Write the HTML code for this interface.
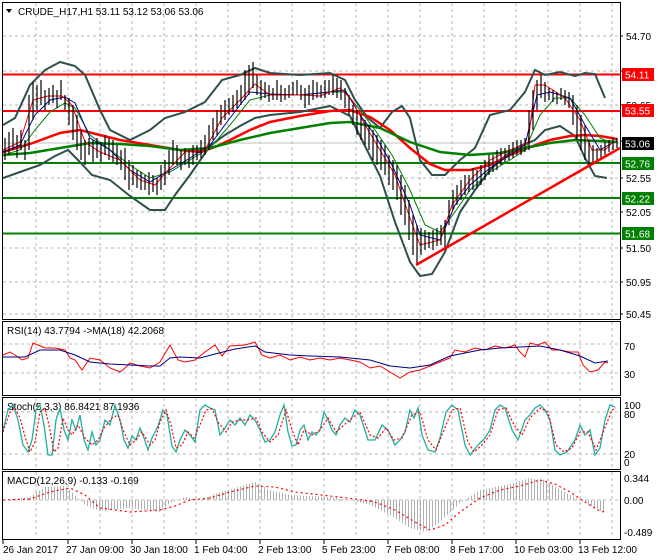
<!DOCTYPE html>
<html><head><meta charset="utf-8"><style>
html,body{margin:0;padding:0;background:#fff;}
svg{display:block;font-family:"Liberation Sans",sans-serif;font-size:10px;}
</style></head><body>
<svg width="660" height="560" viewBox="0 0 660 560" xmlns="http://www.w3.org/2000/svg">
<defs>
<pattern id="hist" width="3" height="10" patternUnits="userSpaceOnUse"><rect x="0" y="0" width="1" height="10" fill="#b0b0b0"/></pattern>
<clipPath id="cm"><rect x="3" y="3" width="617" height="315"/></clipPath>
</defs>
<rect width="660" height="560" fill="#fff"/>
<g stroke="#b8b8b8" stroke-dasharray="3,3" stroke-width="1">
<path d="M36 3V318M68 3V318M100 3V318M132 3V318M164 3V318M196 3V318M228 3V318M260 3V318M292 3V318M324 3V318M356 3V318M388 3V318M420 3V318M452 3V318M484 3V318M516 3V318M548 3V318M580 3V318M612 3V318"/>
<path d="M36 322V394M68 322V394M100 322V394M132 322V394M164 322V394M196 322V394M228 322V394M260 322V394M292 322V394M324 322V394M356 322V394M388 322V394M420 322V394M452 322V394M484 322V394M516 322V394M548 322V394M580 322V394M612 322V394"/>
<path d="M36 398V468M68 398V468M100 398V468M132 398V468M164 398V468M196 398V468M228 398V468M260 398V468M292 398V468M324 398V468M356 398V468M388 398V468M420 398V468M452 398V468M484 398V468M516 398V468M548 398V468M580 398V468M612 398V468"/>
<path d="M36 472V538M68 472V538M100 472V538M132 472V538M164 472V538M196 472V538M228 472V538M260 472V538M292 472V538M324 472V538M356 472V538M388 472V538M420 472V538M452 472V538M484 472V538M516 472V538M548 472V538M580 472V538M612 472V538"/>
<path d="M3 36H620M3 71H620M3 105H620M3 178H620M3 212H620M3 248H620M3 282H620M3 314H620"/>
<path d="M3 344H620M3 373H620M3 412H620M3 454H620M3 500H620"/>
</g>
<g clip-path="url(#cm)">
<path d="M3 143H620" stroke="#c0c0c0" stroke-width="1"/>
<path d="M3 74.5H620M3 111H620" stroke="#ff0000" stroke-width="2"/>
<path d="M3 163H620M3 198H620M3 233.5H620" stroke="#008000" stroke-width="2"/>
<g fill="none" stroke="#2f4f4f" stroke-width="2">
<polyline points="3,125 15,118 30,85 45,70 60,62 75,66 85,75 100,110 110,130 130,140 150,130 165,118 185,112 205,102 222,80 240,75 255,68 270,73 300,75 330,73 345,80 355,100 368,118 380,128 392,112 402,106 410,118 420,160 432,175 445,175 460,160 475,148 490,115 510,110 525,92 535,70 545,75 560,72 575,76 585,73 595,74 605,98"/>
<polyline points="3,178 20,172 40,165 55,156 68,150 78,160 92,175 110,180 130,196 150,210 165,210 175,195 190,175 210,146 225,135 240,126 255,118 270,115 300,112 330,106 350,116 365,146 380,176 395,222 410,262 420,276 432,274 445,252 460,212 475,190 490,170 505,156 520,146 535,140 545,130 560,126 575,136 585,158 595,176 607,178"/>
</g>
<polyline fill="none" stroke="#ff0000" stroke-width="2.5" points="3,152 30,144 60,133 80,130 100,135 120,140 150,145 180,150 200,152 215,147 230,140 250,130 270,122 300,116 330,111 350,110 370,117 390,130 410,148 430,164 445,170 470,170 490,165 510,155 530,147 550,140 570,136 585,135 600,136 617,139"/>
<polyline fill="none" stroke="#008000" stroke-width="2.5" points="3,155 30,153 60,148 90,143 120,144 150,146 180,150 210,148 240,140 270,133 300,128 330,123 350,122 380,128 410,142 440,152 470,155 500,153 525,148 550,143 575,140 600,141 617,142"/>
<polyline fill="none" stroke="#008000" stroke-width="1" points="3,155 20,150 35,130 50,112 65,103 75,108 90,135 110,150 130,165 150,178 170,172 190,160 210,148 230,125 250,100 270,95 300,95 330,92 345,92 360,110 375,130 392,155 410,190 425,225 440,232 455,212 470,190 490,172 510,160 525,150 540,115 555,98 570,98 585,115 600,138 612,143"/>
<polyline fill="none" stroke="#0000a0" stroke-width="1" points="3,152 20,145 35,115 50,100 65,97 75,103 90,138 110,150 130,170 150,182 170,170 190,158 210,145 230,118 250,92 270,94 300,95 330,92 345,90 360,115 375,135 392,165 410,205 420,235 440,240 455,205 470,185 490,168 510,155 525,145 537,95 550,92 570,98 585,125 600,150 612,143"/>
<polyline fill="none" stroke="#ff0000" stroke-width="1" points="3,150 20,142 33,100 48,96 62,96 72,105 85,142 100,152 120,160 140,180 155,185 170,168 185,152 205,150 222,118 240,100 255,84 270,95 300,95 320,96 340,88 352,100 365,125 380,150 395,175 410,218 420,245 440,240 452,205 470,180 490,160 510,150 528,143 535,85 545,85 565,98 580,120 592,150 605,150 612,143"/>
<g stroke="#000" stroke-width="1.2">
<path d="M5 138V160M9 132V155M13 128V150M17 135V158M21 130V150M25 140V160M29 95V150M33 82V120M37 85V110M41 80V105M45 90V110M49 88V105M53 85V103M57 90V108M61 80V100M65 95V110M69 98V125M73 105V140M77 115V150M81 130V160M85 140V165M89 138V155M93 140V162M97 138V158M101 142V162M105 135V155M109 138V160M113 140V162M117 145V165M121 150V170M125 148V180M129 160V190M133 165V185M137 170V188M141 172V190M145 175V190M149 172V195M153 175V192M157 178V195M161 165V190M165 160V185M169 150V175M173 140V165M177 145V165M181 150V170M185 148V165M189 150V168M193 145V165M197 145V160M201 140V158M205 135V155M209 125V150M213 118V140M217 110V135M221 105V125M225 100V120M229 98V115M233 95V112M237 90V108M241 85V105M245 70V100M249 65V95M253 62V88M257 75V95M261 80V100M265 82V98M269 85V102M273 88V100M277 80V100M281 85V102M285 88V100M289 85V98M293 82V95M297 80V95M301 85V100M305 88V108M309 85V105M313 80V100M317 82V98M321 85V98M325 80V98M329 80V95M333 75V95M337 78V98M341 80V100M345 88V108M349 95V115M353 105V125M357 110V135M361 115V140M365 120V145M369 125V150M373 130V160M377 135V165M381 140V170M385 145V175M389 155V185M393 160V190M397 165V200M401 175V215M405 185V225M409 200V240M413 215V255M417 225V265M421 228V255M425 230V250M429 232V248M433 230V250M437 228V246M441 225V245M445 220V250M449 200V225M453 190V210M457 185V205M461 180V200M465 175V195M469 175V192M473 168V190M477 170V188M481 165V185M485 160V180M489 155V175M493 155V172M497 150V170M501 148V165M505 148V162M509 145V160M513 142V158M517 140V155M521 140V155M525 138V152M529 110V150M533 90V130M537 80V110M541 75V98M545 82V102M549 88V100M553 90V102M557 92V104M561 88V100M565 90V105M569 92V108M573 95V125M577 105V140M581 115V150M585 125V160M589 140V165M593 145V165M597 148V160M601 145V158M605 142V155M609 140V152M613 138V150M617 138V148"/>
</g>
<path d="M416 265L620 148" stroke="#ff0000" stroke-width="2.5"/>
</g>
<g fill="none" stroke="#000" stroke-width="1">
<rect x="2.5" y="2.5" width="618" height="317"/>
<rect x="2.5" y="321.5" width="618" height="74"/>
<rect x="2.5" y="397.5" width="618" height="72"/>
<rect x="2.5" y="471.5" width="618" height="68"/>
</g>
<path d="M6 9L12 9L9 13Z" fill="#000"/>
<text x="18" y="15" fill="#000">CRUDE_H17,H1  53.11 53.12 53.06 53.06</text>
<g fill="#000">
<text x="626" y="40">54.70</text>
<text x="626" y="109">53.65</text>
<text x="626" y="182">52.55</text>
<text x="626" y="216">52.05</text>
<text x="626" y="252">51.50</text>
<text x="626" y="286">50.95</text>
<text x="626" y="318">50.45</text>
</g>
<g stroke="#000"><path d="M620 36h3M620 71h3M620 105h3M620 141h3M620 178h3M620 212h3M620 248h3M620 282h3M620 314h3"/></g>
<rect x="622" y="68" width="32" height="13" fill="#ff0000"/><text x="625" y="78.5" fill="#fff">54.11</text>
<rect x="622" y="104" width="32" height="13" fill="#ff0000"/><text x="625" y="114.5" fill="#fff">53.55</text>
<rect x="622" y="137" width="32" height="13" fill="#000"/><text x="625" y="147.5" fill="#fff">53.06</text>
<rect x="622" y="157" width="32" height="13" fill="#008000"/><text x="625" y="167.5" fill="#fff">52.76</text>
<rect x="622" y="192" width="32" height="13" fill="#008000"/><text x="625" y="202.5" fill="#fff">52.22</text>
<rect x="622" y="227" width="32" height="13" fill="#008000"/><text x="625" y="237.5" fill="#fff">51.68</text>
<text x="7" y="334" fill="#000">RSI(14) 43.7794  -&gt;MA(18) 42.2068</text>
<polyline fill="none" stroke="#ff0000" stroke-width="1" points="3,355 10,352 15,355 22,360 28,358 33,343 38,345 45,348 55,348 65,350 70,358 75,360 82,370 90,358 100,360 110,368 120,372 125,368 130,363 140,366 150,368 160,362 170,345 178,360 185,362 195,360 205,352 215,345 222,356 230,346 245,345 255,342 262,355 270,358 280,355 290,360 300,357 310,360 320,358 330,360 340,358 350,360 360,362 370,368 380,366 390,372 400,378 410,372 420,370 430,366 440,362 450,358 455,350 465,352 475,348 485,350 495,346 505,348 515,345 520,352 525,357 530,343 538,345 545,342 552,350 560,350 570,352 578,352 583,365 590,372 598,370 605,362 608,363"/>
<polyline fill="none" stroke="#000080" stroke-width="1" points="3,357 25,357 40,350 60,350 75,355 90,362 110,364 130,365 150,366 160,366 170,358 180,357 200,358 215,354 235,349 255,346 265,352 290,355 310,356 340,357 370,360 390,366 410,368 430,365 450,356 480,350 500,348 520,347 540,346 560,350 580,356 595,363 608,361"/>
<g fill="#000"><text x="624" y="350">70</text><text x="624" y="378">30</text></g>
<text x="7" y="410" fill="#000">Stoch(5,3,3) 86.8421 87.1936</text>
<polyline fill="none" stroke="#20b0a0" stroke-width="1.3" points="3,430 8,410 13,405 18,420 23,445 28,452 32,440 36,410 40,405 44,425 48,455 52,455 56,420 60,408 64,430 68,440 72,420 76,430 80,415 84,440 88,450 92,432 96,445 100,440 105,420 110,425 115,405 120,420 124,440 128,448 132,436 136,440 140,428 144,438 148,450 152,438 158,426 163,410 167,415 172,446 176,452 180,440 185,430 190,435 195,442 200,410 205,405 210,408 215,410 220,435 225,428 230,420 235,425 240,418 245,425 250,415 255,420 260,430 265,442 270,440 275,432 280,415 284,405 288,432 292,446 296,445 300,430 304,425 308,440 312,432 316,435 320,430 324,412 328,420 332,430 336,435 340,425 345,418 350,422 355,410 360,415 368,440 375,440 382,425 388,430 395,445 400,440 405,432 410,410 414,418 418,408 422,435 428,450 435,452 440,438 446,412 452,405 458,410 465,445 470,455 478,445 485,438 490,430 495,410 500,405 505,408 512,430 518,440 525,420 530,415 535,408 540,405 545,410 550,420 555,450 560,455 567,452 575,440 580,425 585,435 590,430 595,455 600,448 605,420 610,405 615,407"/>
<polyline fill="none" stroke="#ff0000" stroke-width="1.2" stroke-dasharray="2,2" points="3,432 10,412 15,408 20,418 26,440 30,452 35,442 40,412 45,408 50,430 54,452 58,448 63,418 68,430 72,435 78,425 85,438 92,445 98,440 104,428 112,418 118,415 124,432 130,445 136,440 142,432 150,445 155,440 160,422 166,410 171,425 176,448 182,445 188,432 194,438 200,425 206,410 212,409 218,422 226,432 232,422 240,420 248,420 256,418 262,432 270,442 278,435 286,410 292,430 298,445 304,430 312,435 320,430 328,418 336,432 344,425 352,418 360,412 370,435 378,438 386,428 394,440 402,438 412,415 420,412 428,440 436,450 444,430 452,410 460,408 468,442 474,452 482,445 490,435 498,410 506,408 514,425 522,435 530,418 540,408 548,412 556,445 564,452 572,448 580,432 588,432 596,450 604,430 612,410 616,408"/>
<g fill="#000"><text x="624" y="409">100</text><text x="624" y="418">80</text><text x="624" y="458">20</text><text x="624" y="466">0</text></g>
<polygon fill="url(#hist)" points="3,500 3,500 30,497 45,487 65,486 75,495 85,505 100,511 130,508 160,512 170,503 185,497 200,500 215,494 235,488 255,482 270,490 290,495 330,497 350,500 370,505 390,515 410,528 425,532 440,522 460,503 480,490 510,484 530,478 545,480 560,490 580,500 595,508 605,513 605,500"/>
<text x="7" y="484" fill="#000">MACD(12,26,9) -0.133 -0.169</text>
<polyline fill="none" stroke="#ff0000" stroke-width="1.2" stroke-dasharray="2,3" points="3,500 30,499 50,492 70,488 85,495 100,508 130,512 160,510 175,506 190,500 210,498 230,492 255,486 275,487 295,492 330,496 355,499 375,502 395,510 415,522 430,530 445,525 460,512 480,498 500,490 520,486 540,480 555,484 570,492 585,502 598,510 607,513"/>
<g fill="#000"><text x="624" y="482">0.344</text><text x="624" y="504">0.00</text><text x="624" y="536">-0.489</text></g>
<g stroke="#000"><path d="M3 540v4M68 540v4M132 540v4M196 540v4M260 540v4M324 540v4M388 540v4M452 540v4M516 540v4M580 540v4"/></g>
<g fill="#000">
<text x="3" y="553">26 Jan 2017</text>
<text x="66" y="553">27 Jan 09:00</text>
<text x="130" y="553">30 Jan 18:00</text>
<text x="194" y="553">1 Feb 04:00</text>
<text x="258" y="553">2 Feb 13:00</text>
<text x="322" y="553">5 Feb 23:00</text>
<text x="386" y="553">7 Feb 08:00</text>
<text x="450" y="553">8 Feb 17:00</text>
<text x="514" y="553">10 Feb 03:00</text>
<text x="578" y="553">13 Feb 12:00</text>
</g>
</svg>
</body></html>
